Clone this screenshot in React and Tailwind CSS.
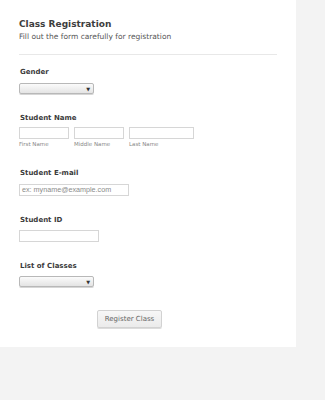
import React from "react";

function FakeSelect() {
  return (
    <div className="relative w-[75px] h-[11px] rounded-[2px] border border-[#b8b8b8] bg-gradient-to-b from-[#fbfbfb] to-[#e4e4e4] shadow-[0_1px_0_#d6d6d6]">
      <span className="absolute right-[3px] top-[1px] text-[5px] leading-[8px] text-[#333]">▼</span>
    </div>
  );
}

function Label({ children, className = "" }) {
  return (
    <div className={`pl-px text-[7px] leading-[10px] font-bold text-[#3b3b3b] ${className}`}>
      {children}
    </div>
  );
}

export default function App() {
  return (
    <div className="min-h-[400px] bg-[#f3f3f3]" style={{ fontFamily: '"DejaVu Sans", Verdana, sans-serif' }}>
      <div className="w-[296px] h-[347px] bg-white px-[19px] pt-[18px]">
        <h1 className="text-[9px] leading-[12px] font-bold text-[#3d3d3d]">Class Registration</h1>
        <p className="mt-[2px] text-[7.5px] leading-[10px] text-[#555555] opacity-[0.99]">
          Fill out the form carefully for registration
        </p>
        <div className="mt-[12px] border-t border-[#e8e8e8]" />

        {/* Gender */}
        <Label className="mt-[12px]">Gender</Label>
        <div className="mt-[6px]">
          <FakeSelect />
        </div>

        {/* Student Name */}
        <Label className="mt-[19px]">Student Name</Label>
        <div className="mt-[4px] flex gap-[5px]">
          {[
            ["First Name", "w-[50px]"],
            ["Middle Name", "w-[50px]"],
            ["Last Name", "w-[65px]"],
          ].map(([sub, w]) => (
            <div key={sub}>
              <div className={`${w} h-[12px] border border-[#d6d6d6] bg-white`} />
              <div className="mt-[2px] text-[5.5px] leading-[7px] text-[#888]">{sub}</div>
            </div>
          ))}
        </div>

        {/* Email */}
        <Label className="mt-[20px]">Student E-mail</Label>
        <div className="mt-[6px] w-[110px] h-[12px] border border-[#d6d6d6] bg-white flex items-center pl-[2px]">
          <span className="text-[7.2px] leading-[10px] text-[#8a8a8a]" style={{ fontFamily: '"Liberation Sans", Arial, sans-serif' }}>
            ex: myname@example.com
          </span>
        </div>

        {/* Student ID */}
        <Label className="mt-[19px]">Student ID</Label>
        <div className="mt-[5px] w-[80px] h-[12px] border border-[#d6d6d6] bg-white" />

        {/* List of Classes */}
        <Label className="mt-[19px]">List of Classes</Label>
        <div className="mt-[5px]">
          <FakeSelect />
        </div>

        <button className="mt-[23px] ml-[78px] w-[65px] h-[18px] rounded-[2px] border border-[#d2d2d2] bg-gradient-to-b from-[#f7f7f7] to-[#ebebeb] text-[7px] text-[#666] shadow-[0_1px_0_#dcdcdc]">
          Register Class
        </button>
      </div>
    </div>
  );
}
